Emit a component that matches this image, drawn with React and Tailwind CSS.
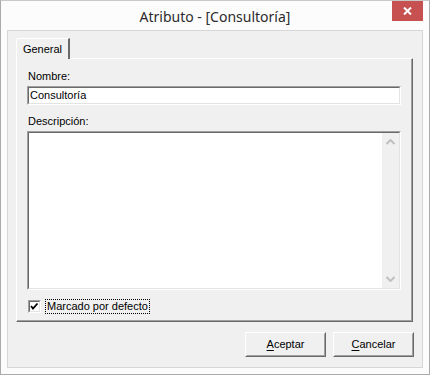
import React from 'react'

const ui = { fontFamily: '"Liberation Sans", Arial, sans-serif' }

function Sunken({ className = '', children }) {
  return (
    <div className={`border border-t-[#a0a0a0] border-l-[#a0a0a0] border-r-white border-b-white ${className}`}>
      <div className="w-full h-full border border-t-[#696969] border-l-[#696969] border-r-[#e3e3e3] border-b-[#e3e3e3] bg-white">
        {children}
      </div>
    </div>
  )
}

function Button({ label, hot }) {
  return (
    <button className="w-[81px] h-[25px] border border-t-white border-l-white border-r-[#696969] border-b-[#696969] bg-[#f0f0f0] p-0">
      <div className="w-full h-full border border-t-[#f0f0f0] border-l-[#f0f0f0] border-r-[#a0a0a0] border-b-[#a0a0a0] flex items-center justify-center text-[11px] text-black">
        <span><span className="underline underline-offset-2">{hot}</span>{label.slice(1)}</span>
      </div>
    </button>
  )
}

export default function App() {
  return (
    <div style={ui} className="w-[430px] h-[375px] bg-[#fcfcfc] border border-t-[#c8c8c8] border-[#aaaaaa] flex flex-col overflow-hidden">
      {/* title bar */}
      <div className="h-[29px] flex items-start shrink-0">
        <div className="flex-1 pl-[37px] pt-[5px] text-center text-[14px] text-[#2b2b2b]" style={{ fontFamily: '"Noto Sans", "Open Sans", sans-serif' }}>
          Atributo - [Consultoría]
        </div>
        <div className="w-[31px] h-[21px] bg-[#c75050] flex items-center justify-center mr-[6px] -mt-px">
          <svg width="9" height="8" viewBox="0 0 9 8">
            <path d="M1 0.5 L8 7.5 M8 0.5 L1 7.5" stroke="white" strokeWidth="2" />
          </svg>
        </div>
      </div>

      {/* client area */}
      <div className="mx-[6px] h-[338px] bg-[#f0f0f0] border border-[#d6d6d6] flex flex-col px-[8px] pt-[7px]">
        {/* tab strip */}
        <div className="flex h-[21px] relative z-10">
          <div className="w-[54px] h-[21px] bg-[#f0f0f0] border-t border-l border-t-white border-l-white border-r-2 border-r-[#696969] rounded-tl-[2px] flex items-center justify-center text-[11px] text-black pt-[1px]">
            General
          </div>
        </div>

        {/* panel */}
        <div className="w-[397px] h-[264px] -mt-px border-t border-l border-white border-r border-b border-r-[#696969] border-b-[#696969]">
          <div className="w-full h-full border-r border-b border-r-[#a0a0a0] border-b-[#a0a0a0] pl-[10px] pt-[11px] flex flex-col">
            <div className="text-[11px] text-black leading-[13px] pl-[1px]">Nombre:</div>
            <Sunken className="w-[374px] h-[19px] mt-[3px]">
              <div className="text-[11px] text-black leading-[13px] pl-[1px] pt-[1px]">Consultoría</div>
            </Sunken>
            <div className="text-[11px] text-black leading-[13px] pl-[1px] mt-[10px]">Descripción:</div>
            <Sunken className="w-[374px] h-[159px] mt-[3px]">
              <div className="w-full h-full flex justify-end">
                <div className="w-[17px] h-full bg-[#f0f0f0] flex flex-col justify-between items-center py-[6px]">
                  <svg width="9" height="6" viewBox="0 0 9 6">
                    <path d="M0.5 5 L4.5 1 L8.5 5" stroke="#bfbfbf" strokeWidth="2" fill="none" />
                  </svg>
                  <svg width="9" height="6" viewBox="0 0 9 6">
                    <path d="M0.5 1 L4.5 5 L8.5 1" stroke="#bfbfbf" strokeWidth="2" fill="none" />
                  </svg>
                </div>
              </div>
            </Sunken>
            <div className="flex items-center mt-[9px] pl-[1px]">
              <Sunken className="w-[13px] h-[13px]">
                <svg width="9" height="9" viewBox="0 0 9 9" className="block">
                  <path d="M1 4 L3 6.5 L7.5 1.5" stroke="black" strokeWidth="1.8" fill="none" />
                </svg>
              </Sunken>
              <div className="ml-[4px] border border-dotted border-black px-[1px] text-[11px] leading-[13px] text-black">
                Marcado por defecto
              </div>
            </div>
          </div>
        </div>

        {/* buttons */}
        <div className="flex justify-end gap-[7px] mt-[10px] w-[398px]">
          <Button label="Aceptar" hot="A" />
          <Button label="Cancelar" hot="C" />
        </div>
      </div>
    </div>
  )
}
